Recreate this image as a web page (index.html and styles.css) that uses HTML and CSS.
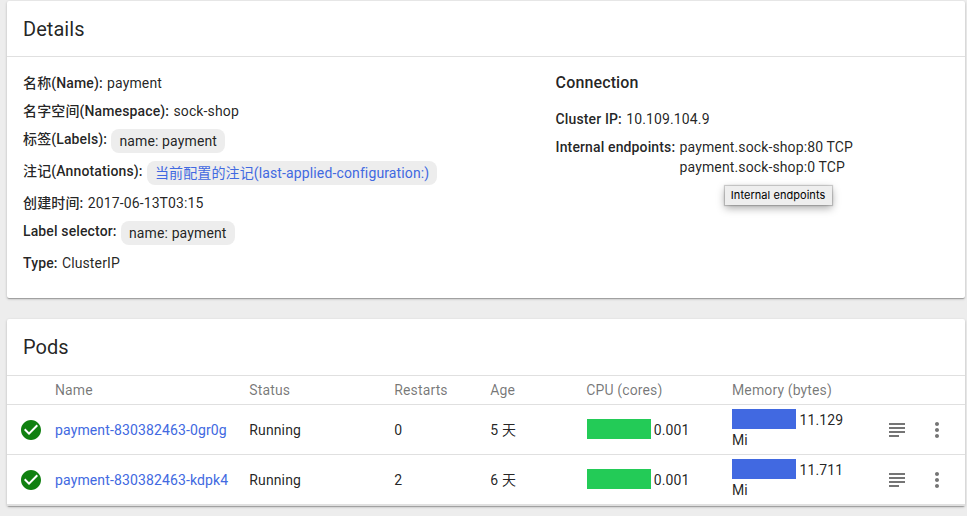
FILE: index.html
```html
<!DOCTYPE html>
<html lang="zh-CN">
<head>
<meta charset="utf-8">
<title>payment</title>
<link rel="stylesheet" href="styles.css">
</head>
<body>
<section class="card details">
  <h2 class="card-title">Details</h2>
  <div class="details-body">
    <div class="column">
      <div class="entry"><b>名称(Name):</b><span>payment</span></div>
      <div class="entry"><b>名字空间(Namespace):</b><span>sock-shop</span></div>
      <div class="entry"><b>标签(Labels):</b><span class="chip">name: payment</span></div>
      <div class="entry"><b>注记(Annotations):</b><a class="chip link">当前配置的注记(last-applied-configuration:)</a></div>
      <div class="entry"><b>创建时间:</b><span>2017-06-13T03:15</span></div>
      <div class="entry"><b>Label selector:</b><span class="chip">name: payment</span></div>
      <div class="entry"><b>Type:</b><span>ClusterIP</span></div>
    </div>
    <div class="column">
      <h3 class="subtitle">Connection</h3>
      <div class="entry"><b>Cluster IP:</b><span>10.109.104.9</span></div>
      <div class="entry endpoints"><b>Internal endpoints:</b><span>payment.sock-shop:80 TCP<br>payment.sock-shop:0 TCP</span>
        <div class="tooltip">Internal endpoints</div>
      </div>
    </div>
  </div>
</section>
<section class="card pods">
  <h2 class="card-title">Pods</h2>
  <div class="row head"><span></span><span>Name</span><span>Status</span><span>Restarts</span><span>Age</span><span>CPU (cores)</span><span>Memory (bytes)</span></div>
  <div class="row">
    <svg class="icon ok" viewBox="0 0 24 24"><path d="M12 2C6.480 2 2 6.480 2 12s4.480 10 10 10 10-4.480 10-10S17.520 2 12 2zm-2 15l-5-5 1.410-1.410L10 14.170l7.590-7.590L19 8l-9 9z"/></svg>
    <a class="link">payment-830382463-0gr0g</a><span>Running</span><span>0</span><span>5 天</span>
    <span><i class="bar cpu"></i>0.001</span>
    <span><i class="bar memory"></i>11.129<br>Mi</span>
    <svg class="icon" viewBox="0 0 24 24"><path d="M14 17H4v2h10v-2zm6-8H4v2h16V9zM4 15h16v-2H4v2zM4 5v2h16V5H4z"/></svg>
    <svg class="icon" viewBox="0 0 24 24"><path d="M12 8c1.100 0 2-.9 2-2s-.9-2-2-2-2 .9-2 2 .9 2 2 2zm0 2c-1.100 0-2 .9-2 2s.9 2 2 2 2-.9 2-2-.9-2-2-2zm0 6c-1.100 0-2 .9-2 2s.9 2 2 2 2-.9 2-2-.9-2-2-2z"/></svg>
  </div>
  <div class="row last">
    <svg class="icon ok" viewBox="0 0 24 24"><path d="M12 2C6.480 2 2 6.480 2 12s4.480 10 10 10 10-4.480 10-10S17.520 2 12 2zm-2 15l-5-5 1.410-1.410L10 14.170l7.590-7.590L19 8l-9 9z"/></svg>
    <a class="link">payment-830382463-kdpk4</a><span>Running</span><span>2</span><span>6 天</span>
    <span><i class="bar cpu"></i>0.001</span>
    <span><i class="bar memory"></i>11.711<br>Mi</span>
    <svg class="icon" viewBox="0 0 24 24"><path d="M14 17H4v2h10v-2zm6-8H4v2h16V9zM4 15h16v-2H4v2zM4 5v2h16V5H4z"/></svg>
    <svg class="icon" viewBox="0 0 24 24"><path d="M12 8c1.100 0 2-.9 2-2s-.9-2-2-2-2 .9-2 2 .9 2 2 2zm0 2c-1.100 0-2 .9-2 2s.9 2 2 2 2-.9 2-2-.9-2-2-2zm0 6c-1.100 0-2 .9-2 2s.9 2 2 2 2-.9 2-2-.9-2-2-2z"/></svg>
  </div>
</section>
</body>
</html>
```
FILE: styles.css
```css
* { box-sizing: border-box; }
body {
  margin: 0;
  padding: 1px 2px 0 7px;
  height: 516px;
  overflow: hidden;
  background: #ededed;
  color: rgba(0, 0, 0, .87);
  font: 14px/20px Roboto, "Noto Sans CJK SC", sans-serif;
  letter-spacing: .13px;
}
.card {
  margin-bottom: 21px;
  background: #fff;
  border-radius: 2px;
  box-shadow: 0 1px 3px 0 rgba(0, 0, 0, .2), 0 1px 1px 0 rgba(0, 0, 0, .14), 0 2px 1px -1px rgba(0, 0, 0, .12);
}
.details { height: 297px; }
.card-title {
  height: 56px;
  margin: 0;
  padding: 0 16px;
  border-bottom: 1px solid #e0e0e0;
  font-size: 20px;
  font-weight: 400;
  line-height: 56px;
  letter-spacing: .05px;
}
.pods .card-title { height: 57px; }
.details-body {
  display: grid;
  grid-template-columns: 532.600px 1fr;
  padding: 16px 0 0 16px;
}
.entry { display: flex; gap: 4.300px; margin-bottom: 8px; }
.entry b { font-weight: 500; }
.chip {
  height: 24px;
  padding: 0 8px;
  border-radius: 8px;
  background: #ededed;
  line-height: 24px;
}
.link { color: #4169e1; }
.subtitle { margin: 0 0 16px; font-size: 16px; font-weight: 500; }
.endpoints { position: relative; }
.tooltip {
  position: absolute;
  top: 49px;
  left: 169px;
  width: 107px;
  height: 19px;
  background: #eee;
  box-shadow: 0 0 1px 1px rgba(0, 0, 0, .18), 0 3px 8px rgba(0, 0, 0, .35);
  color: #000;
  font-family: Inter, sans-serif;
  font-size: 11px;
  line-height: 19px;
  letter-spacing: .05px;
  text-align: center;
}
.row {
  display: grid;
  grid-template-columns: 34px 194.300px 145px 96px 96px 145.700px 153px 40px 1fr;
  align-items: center;
  height: 50px;
  padding-left: 14px;
  border-bottom: 1px solid #e0e0e0;
}
.row.head { height: 29px; color: rgba(0, 0, 0, .54); }
.row.last { height: 51px; border-bottom-width: 2px; }
.icon { width: 24px; height: 24px; fill: #757575; }
.icon.ok { margin-left: -2px; fill: #108010; }
.bar {
  display: inline-block;
  width: 64px;
  height: 20px;
  margin-right: 3.500px;
  vertical-align: -4px;
}
.cpu { margin: 0 3px 0 .5px; background: #23cb57; }
.memory { background: #4169e1; }
```
